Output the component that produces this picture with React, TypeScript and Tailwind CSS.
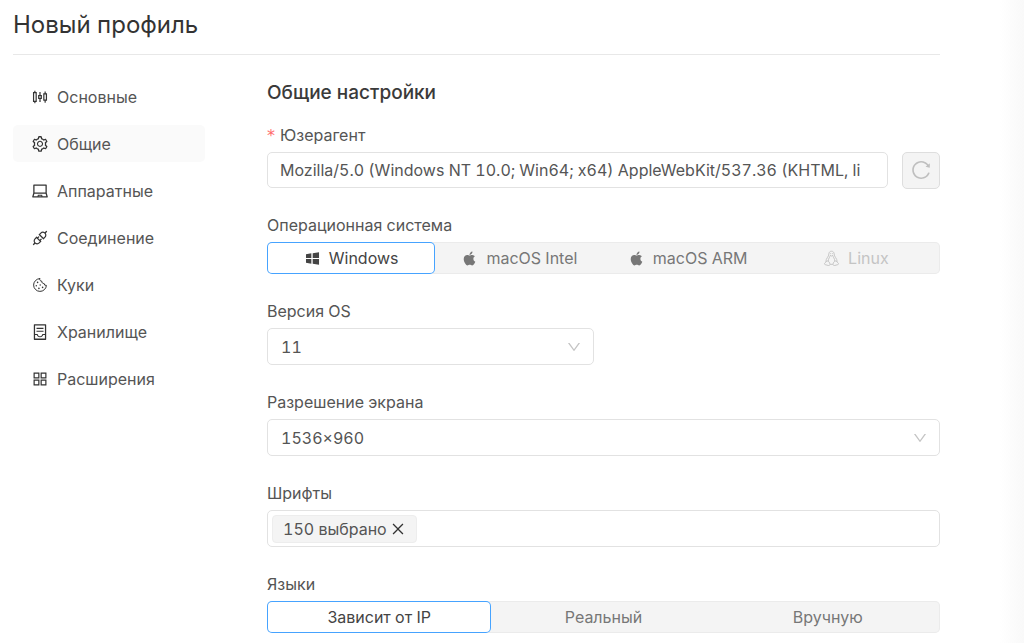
import { useState } from "react";
import type { ReactNode, SVGProps } from "react";
import type { IconType } from "react-icons";
import {
  AiFillApple,
  AiFillWindows,
  AiOutlineApi,
  AiOutlineAppstore,
  AiOutlineClose,
  AiOutlineContainer,
  AiOutlineDown,
  AiOutlineLaptop,
  AiOutlineReload,
  AiOutlineSetting,
  AiOutlineSliders,
} from "react-icons/ai";

type IconComponent = IconType | ((props: SVGProps<SVGSVGElement>) => ReactNode);

function CookieIcon(props: SVGProps<SVGSVGElement>) {
  return (
    <svg viewBox="0 0 18 18" fill="none" stroke="currentColor" strokeLinecap="round" strokeLinejoin="round" {...props}>
      <path d="M8.6 2.6a6.4 6.4 0 1 0 6.8 6.8 2 2 0 0 1-2.3-1.9 2 2 0 0 1-2.3-2.3 2.1 2.1 0 0 1-2.2-2.6Z" />
      <g fill="currentColor" stroke="none">
        <circle cx="6.6" cy="6.4" r="0.8" />
        <circle cx="5.3" cy="9.8" r="0.7" />
        <circle cx="9.2" cy="9" r="0.7" />
        <circle cx="7.9" cy="12.4" r="0.8" />
        <circle cx="11.6" cy="11.4" r="0.8" />
      </g>
    </svg>
  );
}

function PenguinIcon(props: SVGProps<SVGSVGElement>) {
  return (
    <svg viewBox="0 0 18 18" fill="none" stroke="currentColor" strokeLinejoin="round" {...props}>
      <path d="M6.2 4.2C6.2 2.4 7.4 1.3 9 1.3s2.8 1.1 2.8 2.9c0 3 3.2 4.6 3.2 8.3M6.2 4.2c0 3-3.2 4.6-3.2 8.3" />
      <path d="M7.6 5.8c-.3 1.7-2 3.3-2 5.8M10.4 5.8c.3 1.7 2 3.3 2 5.8M7.4 5.4 9 6.4l1.6-1M7.6 15.2h2.8" />
      <path d="M4.2 11.6 1.7 14c-.4.6-.1 1.3.6 1.5l3.2.9c1.2.3 2.2-.5 1.9-1.6-.3-1.3-1.6-3.8-3.2-3.2ZM13.8 11.6l2.5 2.4c.4.6.1 1.3-.6 1.5l-3.2.9c-1.2.3-2.2-.5-1.9-1.6.3-1.3 1.6-3.8 3.2-3.2Z" />
      <path d="M8 3.4v.8M10 3.4v.8" />
    </svg>
  );
}

const sections: { label: string; icon: IconComponent }[] = [
  { label: "Основные", icon: AiOutlineSliders },
  { label: "Общие", icon: AiOutlineSetting },
  { label: "Аппаратные", icon: AiOutlineLaptop },
  { label: "Соединение", icon: AiOutlineApi },
  { label: "Куки", icon: CookieIcon },
  { label: "Хранилище", icon: AiOutlineContainer },
  { label: "Расширения", icon: AiOutlineAppstore },
];

type Option = { value: string; icon?: IconComponent; disabled?: boolean };

const systems: Option[] = [
  { value: "Windows", icon: AiFillWindows },
  { value: "macOS Intel", icon: AiFillApple },
  { value: "macOS ARM", icon: AiFillApple },
  { value: "Linux", icon: PenguinIcon, disabled: true },
];

const languageModes: Option[] = [{ value: "Зависит от IP" }, { value: "Реальный" }, { value: "Вручную" }];

function Label({ htmlFor, children }: { htmlFor: string; children: ReactNode }) {
  return (
    <label htmlFor={htmlFor} className="mb-1 block h-[26px] w-fit leading-[26px]">
      {children}
    </label>
  );
}

function Segmented({ name, label, options }: { name: string; label: string; options: Option[] }) {
  const [value, setValue] = useState(options[0].value);
  return (
    <fieldset>
      <legend className="mb-1 block h-[26px] leading-[26px]">{label}</legend>
      <div className="flex h-8 rounded-[5px] bg-[#f4f4f4] ring-1 ring-inset ring-[#ebebeb]">
        {options.map((o) => (
          <label
            key={o.value}
            className="flex flex-1 cursor-pointer items-center justify-center gap-2 rounded-[5px] text-[#777] has-checked:bg-white has-checked:text-[#444] has-checked:ring-1 has-checked:ring-inset has-checked:ring-[#46a3ff] has-disabled:cursor-not-allowed has-disabled:text-[#c4c4c4]"
          >
            <input
              type="radio"
              name={name}
              value={o.value}
              checked={value === o.value}
              disabled={o.disabled}
              onChange={() => setValue(o.value)}
              className="sr-only"
            />
            {o.icon && <o.icon className="size-[17px]" aria-hidden="true" />}
            {o.value}
          </label>
        ))}
      </div>
    </fieldset>
  );
}

function SelectField({ id, label, value, className }: { id: string; label: string; value: string; className?: string }) {
  return (
    <div className={className}>
      <Label htmlFor={id}>{label}</Label>
      <div className="relative">
        <select
          id={id}
          defaultValue={value}
          className="block h-[37px] w-full appearance-none rounded-[5px] border border-[#e2e2e2] bg-white pl-[13px] pr-10"
        >
          <option>{value}</option>
        </select>
        <AiOutlineDown className="pointer-events-none absolute inset-y-0 right-3 my-auto size-4 text-[#c4c4c4]" />
      </div>
    </div>
  );
}

export default function App() {
  const [active, setActive] = useState("Общие");

  return (
    <div className="flex min-h-screen bg-white font-['Inter','Noto_Sans',sans-serif] text-[16px] text-[#555] tabular-nums">
      <div className="min-w-0 flex-1 pb-2 pl-[13px]">
        <header className="mr-[60px] border-b border-[#e8e8e8] pb-3">
          <h1 className="pt-2 text-[24px] leading-[34px] text-[#333]">Новый профиль</h1>
        </header>

        <div className="mr-[60px] flex gap-[62px] pt-[23px]">
          <nav className="w-48 shrink-0" aria-label="Разделы">
            <ul className="space-y-[10px]">
              {sections.map((s) => (
                <li key={s.label}>
                  <button
                    type="button"
                    onClick={() => setActive(s.label)}
                    aria-current={active === s.label}
                    className="flex h-[37px] w-full cursor-pointer items-center gap-2 rounded-[5px] pl-[18px] aria-[current=true]:bg-[#fafafa]"
                  >
                    <s.icon className="size-[18px] text-[#333]" aria-hidden="true" />
                    {s.label}
                  </button>
                </li>
              ))}
            </ul>
          </nav>

          <form className="min-w-0 flex-1 space-y-6">
            <div>
              <h2 className="mb-[14px] text-[19px] leading-[30px] font-medium text-[#3a3a3a]">Общие настройки</h2>
              <Label htmlFor="user-agent">
                <span className="mr-[5px] font-['DejaVu_Sans'] text-[#ff6b6b]">*</span>Юзерагент
              </Label>
              <div className="flex items-center gap-[14px]">
                <input
                  id="user-agent"
                  defaultValue="Mozilla/5.0 (Windows NT 10.0; Win64; x64) AppleWebKit/537.36 (KHTML, li"
                  required
                  className="h-9 min-w-0 flex-1 rounded-[5px] border border-[#e2e2e2] bg-white px-3"
                />
                <button
                  type="button"
                  disabled
                  aria-label="Обновить"
                  className="-my-px flex h-[37px] w-[38px] items-center justify-center rounded-[5px] border border-[#dedede] bg-[#f4f4f4] text-[#bfbfbf]"
                >
                  <AiOutlineReload className="size-[22px]" />
                </button>
              </div>
            </div>

            <Segmented name="os" label="Операционная система" options={systems} />

            <SelectField id="os-version" label="Версия OS" value="11" className="w-[327px]" />
            <SelectField id="resolution" label="Разрешение экрана" value="1536×960" />

            <div>
              <Label htmlFor="fonts">Шрифты</Label>
              <div className="flex h-[37px] items-center rounded-[5px] border border-[#e2e2e2] px-1">
                <span className="flex h-7 items-center gap-[3px] rounded-[4px] border border-[#ededed] bg-[#f4f4f4] px-[10px]">
                  150 выбрано
                  <button type="button" aria-label="Очистить" className="cursor-pointer text-[#333]">
                    <AiOutlineClose className="size-4" />
                  </button>
                </span>
                <input id="fonts" className="h-full min-w-0 flex-1 bg-transparent outline-none" />
              </div>
            </div>

            <Segmented name="languages" label="Языки" options={languageModes} />
          </form>
        </div>
      </div>
      <div className="w-6 bg-linear-to-r from-white to-[#f9f9f9]" />
    </div>
  );
}
